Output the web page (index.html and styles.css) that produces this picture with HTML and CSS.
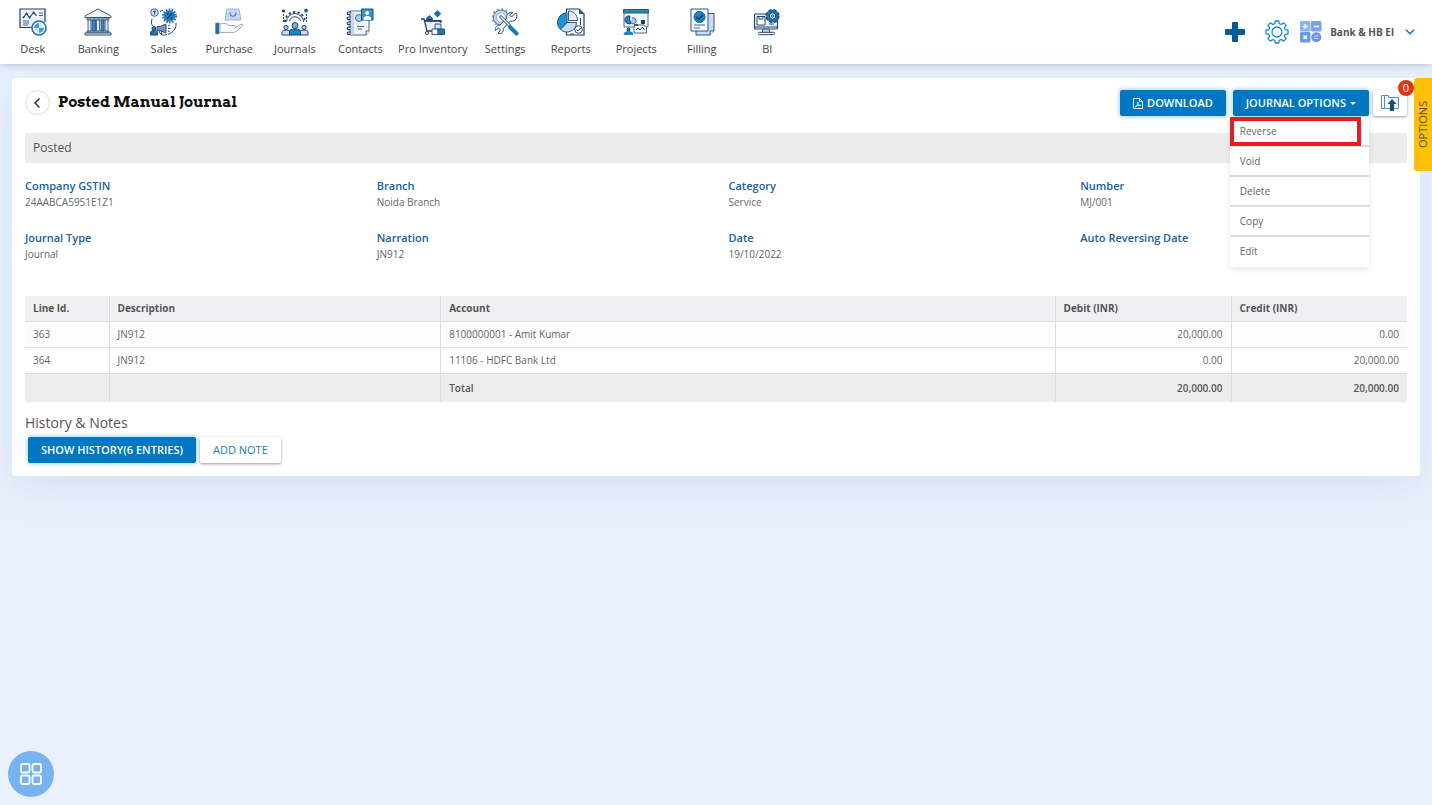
FILE: index.html
```html
<!DOCTYPE html>
<html lang="en">
<head>
<meta charset="utf-8">
<meta name="viewport" content="width=device-width, initial-scale=1">
<title>Posted Manual Journal</title>
<link rel="stylesheet" href="styles.css">
</head>
<body>
<header class="topbar">
  <nav class="nav" aria-label="Main">
    <a class="nav-item" href="#desk">
      <svg class="nav-icon" viewBox="0 0 28 28"><rect x="1" y="1" width="25" height="18" fill="#edf3fd"/><path d="M14 19.500H1V1h25v13" fill="none" stroke="#1d3f66" stroke-width="1.200"/><path d="M4.500 9.500l3-4 3 4 4-5 3 3" fill="none" stroke="#1d3f66" stroke-width="1.100"/><circle cx="4.500" cy="9.500" r="1"/><circle cx="7.500" cy="5.500" r="1"/><circle cx="10.500" cy="9.500" r="1"/><circle cx="14.500" cy="4.500" r="1"/><path d="M20 5h4M20 7.500h4M4 13h6M4 15h6M4 17h5" stroke="#4c6b90"/><circle cx="20" cy="20" r="7" fill="#fff" stroke="#1d6fae" stroke-width="1.600"/><path d="M20 20v-5a5 5 0 0 0-5 5zM20 20v5a5 5 0 0 0 5-5z" fill="#3f9fdc"/><path d="M20 20v-5a5 5 0 0 1 5 5zM20 20v5a5 5 0 0 1-5-5z" fill="#d7eafa"/></svg>
      <span>Desk</span></a>
    <a class="nav-item" href="#banking">
      <svg class="nav-icon" viewBox="0 0 28 28"><path d="M1 9.500v-1.500L14 1l13 7v1.500z" fill="#f1f6fd" stroke="#3c5a7d"/><path d="M3 10h22v2H3zM3 23h22v2H3z" fill="#c9dcf5" stroke="#24466d" stroke-width=".8"/><path d="M1 25h26v2H1z" fill="#fff" stroke="#24466d"/><path d="M4 12h3v11H4zM12.500 12h3v11h-3zM21 12h3v11h-3z" fill="#dbe7fa" stroke="#24466d" stroke-width=".8"/><path d="M8 12h3.500v11H8zM17 12h3v11h-3z" fill="#3289c6" stroke="#24466d" stroke-width=".8"/></svg>
      <span>Banking</span></a>
    <a class="nav-item" href="#sales">
      <svg class="nav-icon" viewBox="0 0 28 28"><circle cx="4.500" cy="4.500" r="3.800" fill="#c9dcf7" stroke="#46668c"/><path d="M4.500 2.500v4M3 3.500h3" stroke="#24466d" stroke-width=".9"/><path d="M10 3.500c1-.8 2-1 3-1M2 11c-1 3-.5 5 .5 7M26 15c.5 5-2 9-8 11.500M11 26.500c2 .8 4 .6 6 0" fill="none" stroke="#24466d"/><circle cx="19.500" cy="8" r="5.800" fill="#1f7fc0"/><circle cx="19.500" cy="8" r="6.500" fill="none" stroke="#1b6fad" stroke-width="2" stroke-dasharray="1.600 1.300"/><path d="M17 10.500l5-5" stroke="#0d3358" stroke-width="1.200"/><circle cx="17.500" cy="6" r="1" fill="#0d3358"/><circle cx="21.500" cy="10" r="1" fill="#0d3358"/><circle cx="4" cy="20.500" r="2" fill="#2c79b8" stroke="#24466d"/><path d="M.5 27v-2c0-2 1.500-2.500 3.500-2.500s3.500.5 3.500 2.500v2z" fill="#1a74b5" stroke="#24466d"/><path d="M7 18.500h3l6-2.500v9l-6-2.500H7z" fill="#7595bd" stroke="#35567c"/><path d="M9 22.500l1 3h2l-1-3M18 18l2-1M18 20.500h2.500M18 23l2 1" fill="none" stroke="#24466d"/></svg>
      <span>Sales</span></a>
    <a class="nav-item" href="#purchase">
      <svg class="nav-icon" viewBox="0 0 28 28"><path d="M12 1h12l2 11H10z" fill="#c8d8fa" stroke="#9badd2" stroke-width=".9"/><path d="M15 4.500c0 5 6 5 6 0" fill="none" stroke="#5674ae" stroke-width="1.200"/><path d="M5 16c4-1 6-1 9 1.500h5c2 .2 2 2.500 0 2.800l7-4c2 0 2.300 1 1 2.200l-6 5c-1 .7-2 .9-4 .9H5z" fill="#fff" stroke="#929ba6" stroke-width=".9"/><path d="M.8 15.200H4v10.500H.8z" fill="#286fae" stroke="#315f92" stroke-width=".8"/><path d="M4.500 16v8.500" stroke="#adc7ec"/></svg>
      <span>Purchase</span></a>
    <a class="nav-item" href="#journals">
      <svg class="nav-icon" viewBox="0 0 28 28"><path d="M5.500 14a8.500 8.500 0 1 1 17 0" fill="none" stroke="#24466d"/><path d="M4 14a10 10 0 1 1 20 0" fill="none" stroke="#24466d" stroke-width="1.800" stroke-dasharray="2.300 2.200"/><path d="M8.500 13a5.700 5.700 0 0 1 11 0" fill="none" stroke="#24466d"/><circle cx="2.500" cy="3" r="1.600"/><circle cx="25" cy="2.500" r="1.900" fill="#1f6697"/><path d="M2.500 6v8M25.500 6v8" stroke="#24466d" stroke-dasharray="2 1"/><circle cx="5" cy="19.500" r="2.100" fill="#a8c7ed" stroke="#24466d"/><circle cx="23" cy="19.500" r="2.100" fill="#a8c7ed" stroke="#24466d"/><path d="M1 27v-3q0-2 4-2t4 2v3zM19 27v-3q0-2 4-2t4 2v3z" fill="#c9dcf7" stroke="#24466d"/><circle cx="14" cy="17.500" r="3" fill="#79aee0" stroke="#24466d"/><path d="M8.500 27v-3.500q0-2.500 5.500-2.500t5.500 2.500V27z" fill="#1d83c5" stroke="#24466d"/></svg>
      <span>Journals</span></a>
    <a class="nav-item" href="#contacts">
      <svg class="nav-icon" viewBox="0 0 28 28"><path d="M4 3h17q2 0 2 3v17l-3 4H4z" fill="#f1f5fd" stroke="#46668c"/><path d="M5 3.500h3v23H5z" fill="#bfd5f8"/><circle cx="13" cy="10" r="3.500" fill="#a9cdf1" stroke="#46668c"/><path d="M11 18.500h7M12 21h4" stroke="#46668c"/><path d="M15.500 1H27v11H15.500z" fill="#3195d2" stroke="#1d527f"/><circle cx="21.200" cy="5" r="2" fill="#fff"/><path d="M17.500 12v-1.500q0-2.500 3.700-2.500T25 10.500V12z" fill="#fff"/><path d="M20 27v-4h3" fill="#fff" stroke="#46668c"/><path d="M5 4H2.500a1.300 1.300 0 0 0 0 2.600H4M5 9H2.500a1.300 1.300 0 0 0 0 2.600H4M5 14H2.500a1.300 1.300 0 0 0 0 2.600H4M5 19H2.500a1.300 1.300 0 0 0 0 2.600H4M5 24H2.500a1.200 1.200 0 0 0 0 2.400H4" fill="none" stroke="#1d3f66" stroke-width="1.200"/></svg>
      <span>Contacts</span></a>
    <a class="nav-item" href="#inventory">
      <svg class="nav-icon" viewBox="0 0 28 28"><path d="M18.500 2l3.700 3.700-3.700 3.700-3.700-3.700z" fill="#1c6fa7"/><path d="M7.500 11.500c0-2 1-2.500 3-3.800 1.500 1.800 3 1.800 3 3.800z" fill="#1f78ae" stroke="#1d3f66"/><path d="M2 11h3l3 12h7M5.500 13H22v2M7 17h9" fill="none" stroke="#1d3f66" stroke-width="1.300"/><path d="M6.500 13.500H20v3l-4 3H8z" fill="#edf3fd"/><path d="M6 13h16" stroke="#1d3f66" stroke-width="1.500"/><circle cx="8" cy="25" r="1.500" fill="#fff" stroke="#1d3f66"/><path d="M16 16h6v5h-6z" fill="#d7e5fa" stroke="#35567c"/><path d="M13 21h6v5.500h-6z" fill="#fff" stroke="#35567c"/><path d="M19 21h6.500v5.500H19z" fill="#1b76ab" stroke="#35567c"/></svg>
      <span>Pro Inventory</span></a>
    <a class="nav-item" href="#settings">
      <svg class="nav-icon" viewBox="0 0 28 28"><circle cx="10" cy="9.500" r="7.500" fill="#c8dafb" stroke="#46668c"/><circle cx="10" cy="9.500" r="8.500" fill="none" stroke="#7697c7" stroke-width="1.800" stroke-dasharray="2 2.450"/><circle cx="10" cy="9.500" r="4.800" fill="#edf3fd" stroke="#7d98bd" stroke-width=".8"/><path d="M24 5.500l-3.500 3.500-2-2L22 4.500c-4-1-7 2-6.200 5.500l-7 7.500c-3-.5-5 2-4.300 5l3-2.500 2 2-2.500 3.500c4 .5 6-2 5.300-5L19.500 13c5 1 7.500-3 6-7.500z" fill="#f5f8fe" stroke="#2b4c73"/><path d="M9 8l10 10" stroke="#24466d" stroke-width="3"/><path d="M9.500 8.500l9 9" stroke="#fff" stroke-width="1.400"/><path d="M19 19l6.500 6.500" stroke="#1b79bb" stroke-width="4" stroke-linecap="round"/></svg>
      <span>Settings</span></a>
    <a class="nav-item" href="#reports">
      <svg class="nav-icon" viewBox="0 0 28 28"><path d="M9.500 1H22l5 5v21H9.500z" fill="#fff" stroke="#1d3f66" stroke-width="1.200"/><path d="M22 1v5h5z" fill="#1a5e94"/><path d="M10 14.500h9.500a9.500 9.500 0 0 1-16.200 6.700z" fill="#c9dcf7" stroke="#35567c"/><path d="M10 5v9.500l-6.700 6.700A9.500 9.500 0 0 1 10 5z" fill="#1c93d8" stroke="#1d5687"/><path d="M11.500 3v9.500h9C20.500 7 17 3 11.500 3z" fill="#e8f0fc" stroke="#35567c"/><path d="M23.500 10v7M13 26h4" stroke="#24466d"/><circle cx="21.500" cy="21.500" r="3.800" fill="#fff" stroke="#24466d"/><path d="M19.500 21.500l1.500 1.500 2.500-3" fill="none" stroke="#24466d"/></svg>
      <span>Reports</span></a>
    <a class="nav-item" href="#projects">
      <svg class="nav-icon" viewBox="0 0 28 28"><path d="M2 2h24v17H2z" fill="#eff7fc" stroke="#4c6f91"/><path d="M1.500 1.500h25V5h-25z" fill="#2b85ac" stroke="#275b82"/><path d="M8 8a4 4 0 1 0 2 6.500L7.500 12z" fill="#1f83b9" stroke="#24466d"/><path d="M10 10a3 3 0 1 1-1 5" fill="#a8c7ed" stroke="#46668c"/><path d="M19 12h4v4h-4z" fill="#1d3f66"/><path d="M13 17h9l2.500 2v6H12v-6z" fill="#fff" stroke="#46668c"/><path d="M14 22l2-2 2 2 2.500-3 2 3" fill="none" stroke="#1d3f66"/><circle cx="6.500" cy="21.500" r="2" fill="#20638e"/><path d="M1.500 27c.5-3 2-4 5-4s4.500 1 5 4z" fill="#2484b9"/><path d="M12 17h4" stroke="#35567c" stroke-width="2"/></svg>
      <span>Projects</span></a>
    <a class="nav-item" href="#filling">
      <svg class="nav-icon" viewBox="0 0 28 28"><path d="M8 5.500h18V23l-4 4H8z" fill="#c9dcf7" stroke="#35567c"/><path d="M22 27v-4h4" fill="#fff" stroke="#35567c"/><path d="M3 1h17v22H3z" fill="#f5f8fe" stroke="#35567c"/><circle cx="11.500" cy="9" r="5.500" fill="#1685cb" stroke="#195b91"/><path d="M8.500 9l2.300 2.300L15 7" fill="none" stroke="#0d3358" stroke-width="1.400"/><path d="M6 17h11M6 20h6" stroke="#46668c"/></svg>
      <span>Filling</span></a>
    <a class="nav-item" href="#bi">
      <svg class="nav-icon" viewBox="0 0 28 28"><rect x="1.500" y="6" width="23" height="15" rx="1" fill="#edf3fd" stroke="#24466d" stroke-width="1.200"/><path d="M4 8.500h8v8.500H4z" fill="#fff" stroke="#24466d"/><path d="M6 8v3h4V8M2 19h22M16 16h5" stroke="#24466d" fill="none"/><path d="M10 21h6l1 3.500H9z" fill="#b9d4f3" stroke="#35567c"/><rect x="5.500" y="24.300" width="16" height="2.400" rx="1" fill="#fff" stroke="#24466d"/><circle cx="19.500" cy="8" r="6.200" fill="#1b76b8"/><circle cx="19.500" cy="8" r="6.200" fill="none" stroke="#15598c" stroke-width="1.800" stroke-dasharray="3.400 1.470"/><circle cx="19.500" cy="8" r="3.200" fill="#e8f4fd" stroke="#12406b"/><circle cx="19.500" cy="8" r="1.200" fill="#fff" stroke="#12406b"/></svg>
      <span>BI</span></a>
  </nav>
  <div class="account">
    <button class="plain" aria-label="Add"><svg width="20" height="20" viewBox="0 0 20 20"><path d="M7 1q0-1 1-1h4q1 0 1 1v6h6q1 0 1 1v4q0 1-1 1h-6v6q0 1-1 1H8q-1 0-1-1v-6H1q-1 0-1-1V8q0-1 1-1h6z" fill="#035a90"/></svg></button>
    <button class="plain gear" aria-label="Preferences"><svg width="24" height="24" viewBox="0 0 24 24" fill="none" stroke="#1689cc" stroke-width="1.300" stroke-linejoin="round"><path d="M9.700 3.700L10.200 1h3.600l.5 2.700 2 .8 2.300-1.600 2.500 2.500-1.600 2.300.8 2 2.700.5v3.600l-2.700.5-.8 2 1.600 2.300-2.500 2.500-2.300-1.600-2 .8-.5 2.700h-3.600l-.5-2.700-2-.8-2.300 1.600-2.500-2.500 1.600-2.300-.8-2L1 13.800v-3.600l2.700-.5.800-2-1.600-2.300 2.500-2.500 2.300 1.600z"/><circle cx="12" cy="12" r="5"/></svg></button>
    <button class="plain calc" aria-label="Calculator"><svg width="22" height="22" viewBox="0 0 22 22"><rect width="10.500" height="10.500" rx="1.500" fill="#8eb2f4"/><rect x="11" width="10.500" height="10.500" rx="1.500" fill="#77a3ef"/><rect y="11" width="10.500" height="10.500" rx="1.500" fill="#659ae9"/><circle cx="16.300" cy="16.300" r="5" fill="#6c92e9"/><path d="M5.300 3v5M2.800 5.500h5M14 5.500h5M3.500 14.500l3.500 3.500M7 14.500L3.500 18" stroke="#fff" stroke-width="1.500"/><path d="M14 15h4.500M14 17.500h4.500" stroke="#c4d8ff" stroke-width="1.200"/></svg></button>
    <button class="plain company">Bank &amp; HB El <svg width="10" height="6" viewBox="0 0 10 6"><path d="M1 .8l4 4 4-4" fill="none" stroke="#176fae" stroke-width="1.400"/></svg></button>
  </div>
</header>

<main class="card">
  <div class="card-head">
    <button class="back" aria-label="Back"><svg width="8" height="12" viewBox="0 0 8 12"><path d="M5.500 1.500L1 6l4.500 4.500" fill="none" stroke="#222" stroke-width="1.400"/></svg></button>
    <h1 class="title">Posted Manual Journal</h1>
    <button class="btn btn-primary"><svg width="10" height="11" viewBox="0 0 10 11" fill="none" stroke="#fff"><path d="M.5.500h6l3 3v7h-9z"/><path d="M6.500.500v3h3M2 9c2-1 3-3 2.700-5C5 6.500 6 7.500 8 7.500 5.500 7 4 7.700 2 9z" stroke-width=".8"/></svg>DOWNLOAD</button>
    <div class="dropdown">
      <button class="btn btn-primary" aria-haspopup="true" aria-expanded="true">JOURNAL OPTIONS<span class="caret"></span></button>
      <ul class="menu">
        <li class="marked"><button>Reverse</button></li>
        <li><button>Void</button></li>
        <li><button>Delete</button></li>
        <li><button>Copy</button></li>
        <li><button>Edit</button></li>
      </ul>
    </div>
    <button class="btn btn-light upload" aria-label="Attachments"><svg width="18" height="17" viewBox="0 0 18 17"><path d="M3.500 13.500h-3V.500h3M3.500 13.500V.500h4v2h10v11z" fill="#f6f9fc" stroke="#4581ab" stroke-width=".9"/><path d="M11 4l4.500 5H13v7H9V9H6.500z" fill="#0f4f7e"/></svg><span class="badge">0</span></button>
  </div>

  <div class="status">Posted</div>

  <dl class="fields">
    <div><dt>Company GSTIN</dt><dd>24AABCA5951E1Z1</dd></div>
    <div><dt>Branch</dt><dd>Noida Branch</dd></div>
    <div><dt>Category</dt><dd>Service</dd></div>
    <div><dt>Number</dt><dd>MJ/001</dd></div>
    <div><dt>Journal Type</dt><dd>Journal</dd></div>
    <div><dt>Narration</dt><dd>JN912</dd></div>
    <div><dt>Date</dt><dd>19/10/2022</dd></div>
    <div><dt>Auto Reversing Date</dt><dd></dd></div>
  </dl>

  <table class="lines">
    <colgroup><col class="c-id"><col class="c-desc"><col><col class="c-amount"><col class="c-amount"></colgroup>
    <thead><tr><th>Line Id.</th><th>Description</th><th>Account</th><th>Debit (INR)</th><th>Credit (INR)</th></tr></thead>
    <tbody>
      <tr><td>363</td><td>JN912</td><td>8100000001 - Amit Kumar</td><td class="num">20,000.00</td><td class="num">0.00</td></tr>
      <tr><td>364</td><td>JN912</td><td>11106 - HDFC Bank Ltd</td><td class="num">0.00</td><td class="num">20,000.00</td></tr>
    </tbody>
    <tfoot><tr><td></td><td></td><td>Total</td><td class="num">20,000.00</td><td class="num">20,000.00</td></tr></tfoot>
  </table>

  <h2 class="subtitle">History &amp; Notes</h2>
  <div class="actions">
    <button class="btn btn-primary">SHOW HISTORY(6 ENTRIES)</button>
    <button class="btn btn-light">ADD NOTE</button>
  </div>
</main>

<button class="side-tab">OPTIONS</button>
<button class="fab" aria-label="Apps"><svg width="22" height="22" viewBox="0 0 22 22" fill="none" stroke="#fff" stroke-width="1.800"><rect x="1" y="1" width="8.500" height="8.500" rx="1.500"/><rect x="12.500" y="1" width="8.500" height="8.500" rx="1.500"/><rect x="1" y="12.500" width="8.500" height="8.500" rx="1.500"/><rect x="12.500" y="12.500" width="8.500" height="8.500" rx="1.500"/></svg></button>
</body>
</html>
```
FILE: styles.css
```css
* { box-sizing: border-box; }

body {
  margin: 0;
  min-height: 100vh;
  background: #eaf1fd;
  color: #555;
  font: 11px/16px "Open Sans", "Noto Sans", sans-serif;
}

button {
  font: inherit;
  color: inherit;
  border: 0;
  padding: 0;
  background: none;
  cursor: pointer;
}

svg { flex: none; display: block; }

/* Top bar */
.topbar {
  display: flex;
  align-items: center;
  justify-content: space-between;
  height: 64px;
  padding-right: 17px;
  background: #fff;
  box-shadow: 0 1px 8px rgba(60, 80, 130, .3);
}

.nav {
  display: flex;
  flex: 0 1 800px;
  align-self: flex-start;
  padding-top: 8px;
}

.nav-item {
  flex: 1 1 0;
  min-width: max-content;
  padding: 0 5px;
  display: flex;
  flex-direction: column;
  align-items: center;
  gap: 5px;
  color: #444;
  font-weight: 500;
  text-decoration: none;
}

.nav-icon { width: 28px; height: 28px; fill: #1d3f66; }

.account { display: flex; align-items: center; }
.plain { display: flex; align-items: center; }
.gear { margin-left: 20px; }
.calc { margin-left: 11px; }
.company { margin-left: 8px; gap: 11px; font-size: 10px; font-weight: 700; }

/* Card */
.card {
  margin: 14px 12px;
  padding: 12px 13px 13px;
  background: #fff;
  border-radius: 3px;
  box-shadow: 0 12px 40px rgba(90, 110, 170, .12);
}

.card-head { display: flex; align-items: flex-start; }

.back {
  display: flex;
  align-items: center;
  justify-content: center;
  width: 25px;
  height: 25px;
  border: 1px solid #ddd;
  border-radius: 50%;
}

.title {
  flex: 1;
  margin: 0 8px;
  color: #111;
  font: 700 15px/24px "Arvo", "DejaVu Serif", serif;
}

.btn {
  display: flex;
  align-items: center;
  justify-content: center;
  gap: 4px;
  height: 26px;
  padding: 0 13px;
  border-radius: 2px;
  font-weight: 600;
}

.btn-primary {
  background: #0077c0;
  color: #fff;
  box-shadow: 0 0 5px rgba(0, 130, 220, .5);
}

.btn-light {
  background: #fff;
  color: #1d7cbc;
  font-weight: 500;
  box-shadow: 0 1px 3px rgba(0, 0, 0, .4);
}

.caret {
  border: 3px solid transparent;
  border-top-color: #fff;
  border-bottom: 0;
}

.dropdown { position: relative; margin: 0 4px 0 7px; }

.menu {
  position: absolute;
  z-index: 2;
  top: 27px;
  right: 0;
  left: -3px;
  margin: 0;
  padding: 0 0 2px;
  list-style: none;
  background: #fff;
  color: #666;
  box-shadow: 0 2px 6px rgba(0, 60, 120, .12);
}

.menu li + li { border-top: 2px solid #ddd; }
.menu button { width: 100%; height: 28px; padding: 0 10px; font-size: 10px; text-align: left; }
.menu .marked { position: relative; }
.menu .marked::after {
  content: "";
  position: absolute;
  inset: 0 8px -1px 0;
  border: 4px solid #e51c23;
  pointer-events: none;
}

.upload { position: relative; width: 34px; padding: 0; }

.badge {
  position: absolute;
  top: -10px;
  right: -7px;
  width: 16px;
  height: 16px;
  border-radius: 50%;
  background: #e0360f;
  color: #fff;
  font-weight: 400;
}

.status {
  margin-top: 17px;
  padding: 7px 8px;
  border-radius: 2px;
  background: #ececec;
  font-size: 12px;
  font-weight: 500;
}

.fields {
  display: grid;
  grid-template-columns: repeat(4, 1fr);
  gap: 20px 25px;
  margin: 15px 0 34px;
}

.fields dt { color: #17609c; font-weight: 600; }
.fields dd { margin: 0; min-height: 16px; color: #666; font-size: 10px; }

/* Journal lines */
.lines {
  width: 100%;
  table-layout: fixed;
  border-collapse: collapse;
  font-size: 10px;
}

.c-id { width: 84px; }
.c-desc { width: 24%; }
.c-amount { width: 176px; }

.lines th,
.lines td { height: 26px; padding: 0 8px; text-align: left; }
.lines th { height: 25px; background: #f0f0f2; font-weight: 700; }
.lines tr > * + * { border-left: 1px solid #ddd; }
.lines tbody { color: #666; }
.lines tbody tr { border-top: 1px solid #ddd; }
.lines tbody tr:first-child { background: #fcfcfc; }
.lines tfoot td { height: 29px; border-top: 1px solid #ddd; background: #ededed; font-weight: 600; }
.lines .num { text-align: right; }

.subtitle { margin: 12px 0 5px; font-size: 14px; font-weight: 400; line-height: 18px; }
.actions { display: flex; gap: 4px; padding-left: 3px; }

/* Floating controls */
.side-tab {
  position: absolute;
  top: 78px;
  right: 0;
  width: 18px;
  height: 93px;
  border-radius: 0 3px 3px 0;
  background: #ffc107;
  writing-mode: vertical-rl;
  transform: rotate(180deg);
}

.fab {
  position: fixed;
  bottom: 8px;
  left: 8px;
  display: flex;
  align-items: center;
  justify-content: center;
  width: 46px;
  height: 46px;
  border-radius: 50%;
  background: #77b3f1;
}
```
